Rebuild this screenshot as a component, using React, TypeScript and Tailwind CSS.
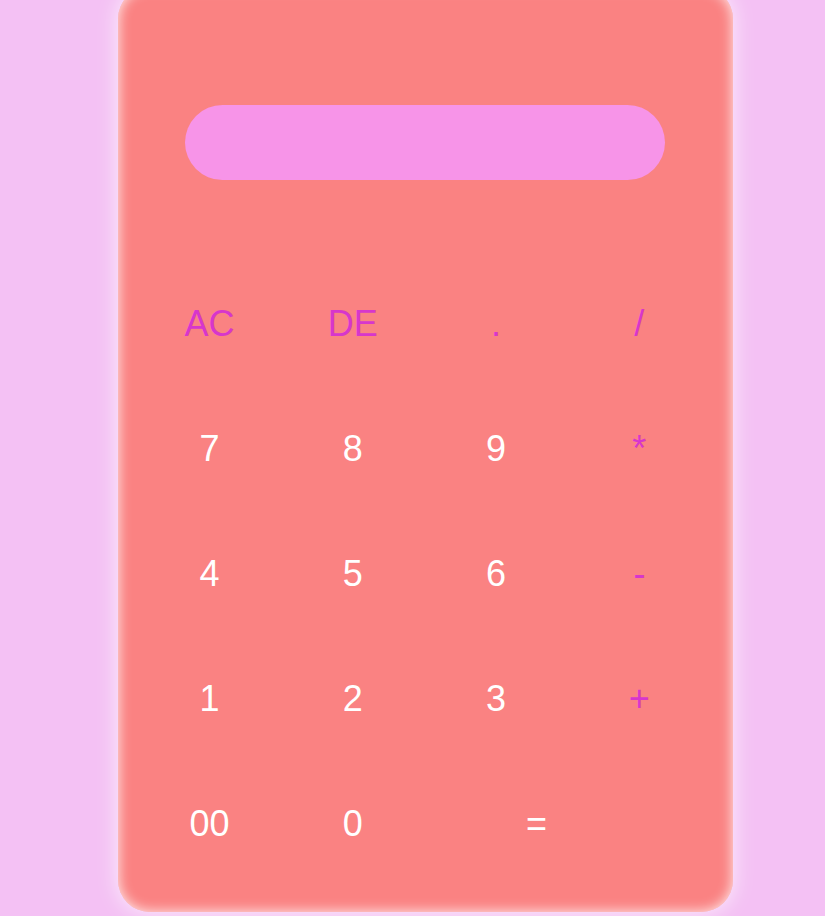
import React from 'react';

const keys: { label: string; accent?: boolean; wide?: boolean }[] = [
    { label: 'AC', accent: true },
    { label: 'DE', accent: true },
    { label: '.', accent: true },
    { label: '/', accent: true },
    { label: '7' },
    { label: '8' },
    { label: '9' },
    { label: '*', accent: true },
    { label: '4' },
    { label: '5' },
    { label: '6' },
    { label: '-', accent: true },
    { label: '1' },
    { label: '2' },
    { label: '3' },
    { label: '+', accent: true },
    { label: '00' },
    { label: '0' },
    { label: '=', wide: true },
];

export default function App() {
    return (
        <div className="h-[916px] w-full overflow-hidden bg-[#f4c1f4] flex font-['Liberation_Sans',Arial,sans-serif]">
            {/* Calculator body */}
            <div className="mt-[-13px] ml-[118px] h-[925px] w-[615px] shrink-0 rounded-[32px] bg-[#fa8282] shadow-[0_0_22px_rgba(255,255,255,0.75),inset_0_0_13px_rgba(255,255,255,0.9)] flex flex-col items-center pl-5 pr-[22px] pt-[118px]">
                {/* Display */}
                <div className="w-[480px] h-[75px] rounded-full bg-[#f794e8] shrink-0" />

                {/* Keys */}
                <div className="mt-[81px] grid grid-cols-4 w-full auto-rows-[125px]">
                    {keys.map((k) =>
                        k.wide ? (
                            <div key={k.label} className="col-span-2 flex items-center">
                                <button className="w-[224px] h-full text-[36px] text-white leading-none">{k.label}</button>
                            </div>
                        ) : (
                            <button
                                key={k.label}
                                className={`flex items-center justify-center text-[36px] leading-none ${k.accent ? 'text-[#d736cc]' : 'text-white'}`}
                            >
                                {k.label}
                            </button>
                        )
                    )}
                </div>
            </div>
        </div>
    );
}
